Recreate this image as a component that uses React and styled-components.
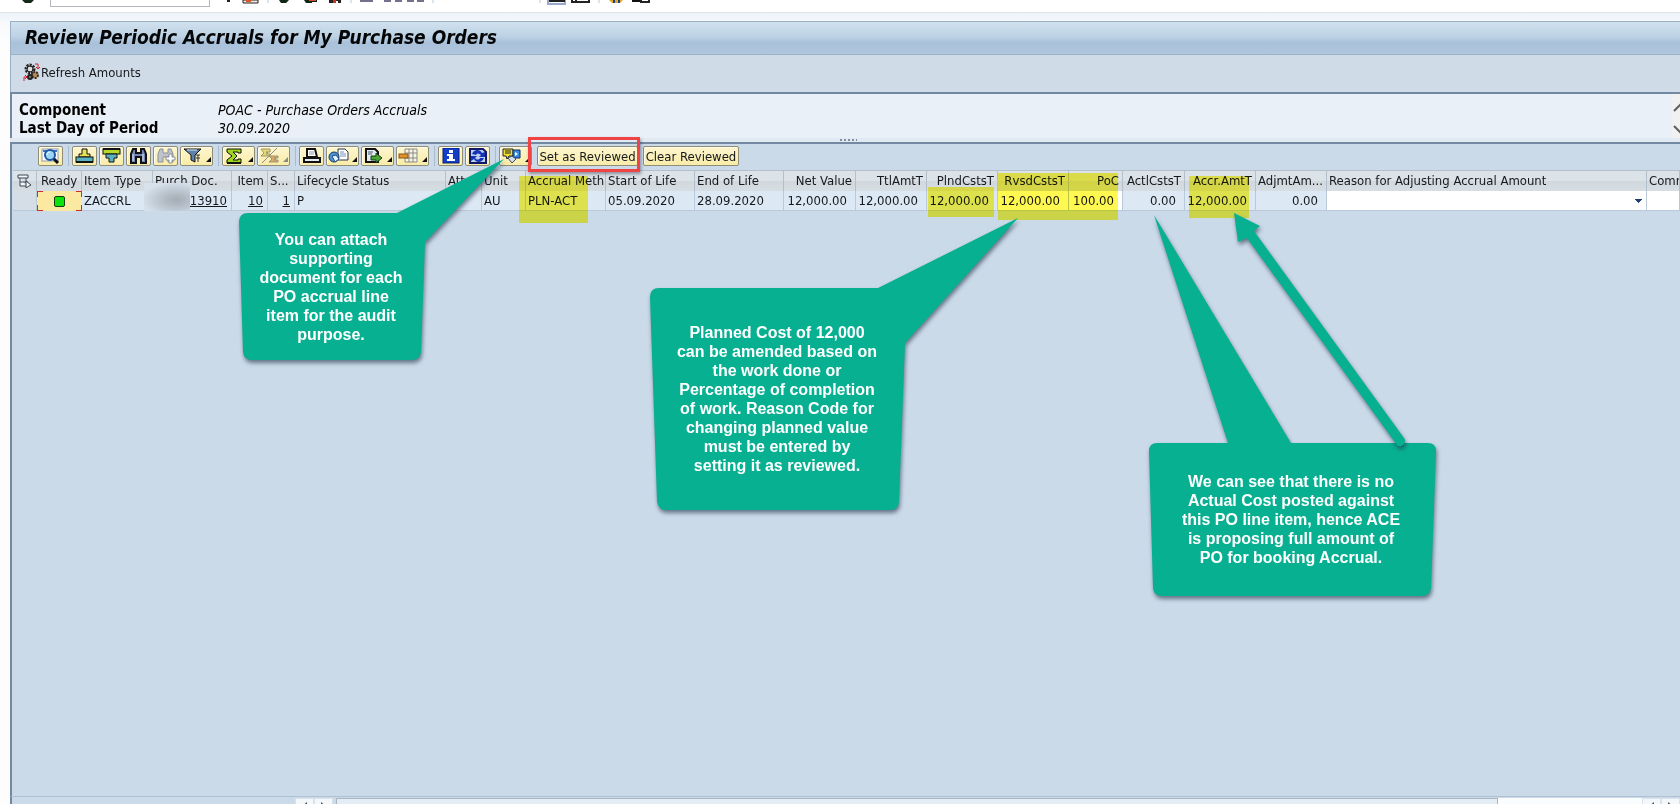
import styled, { createGlobalStyle, css } from "styled-components";

const columns = [
  { id: "sel", width: 24 },
  { id: "ready", title: "Ready", width: 45 },
  { id: "type", title: "Item Type", width: 71 },
  { id: "doc", title: "Purch Doc.", width: 79 },
  { id: "item", title: "Item", width: 36, right: true },
  { id: "seq", title: "S...", width: 27 },
  { id: "status", title: "Lifecycle Status", width: 151 },
  { id: "att", title: "Att", width: 36 },
  { id: "unit", title: "Unit", width: 44 },
  { id: "meth", title: "Accrual Meth", width: 80 },
  { id: "start", title: "Start of Life", width: 89 },
  { id: "end", title: "End of Life", width: 89 },
  { id: "net", title: "Net Value", width: 72, right: true },
  { id: "ttl", title: "TtlAmtT", width: 71, right: true },
  { id: "plnd", title: "PlndCstsT", width: 71, right: true },
  { id: "rvsd", title: "RvsdCstsT", width: 71, right: true },
  { id: "poc", title: "PoC", width: 54, right: true },
  { id: "actl", title: "ActlCstsT", width: 62, right: true },
  { id: "accr", title: "Accr.AmtT", width: 71, right: true },
  { id: "adj", title: "AdjmtAm...", width: 71, right: true },
  { id: "reason", title: "Reason for Adjusting Accrual Amount", width: 320 },
  { id: "comment", title: "Comm" },
];

function MenuTick({ dim }) {
  return <path d="M30 14V9l-5 5z" fill={dim ? "#8a8a80" : "#111"} />;
}

const icons = {
  details: (
    <>
      <rect x="3" y="1" width="16" height="12" fill="#fff" stroke="#8f99a8" />
      <path d="M4 2h14v2H4z" fill="#3c78c8" />
      <path d="M14 10l5 5" stroke="#111" strokeWidth="3" />
      <circle cx="11" cy="7" r="5" fill="#9fd3f2" stroke="#1b58a8" strokeWidth="2" />
      <path d="M8 7c0-2 1-3 3-3" fill="none" stroke="#fff" />
    </>
  ),
  asc: (
    <>
      <path d="M9 1h5v5h3v3H6V6h3z" fill="#e6df57" stroke="#111" />
      <rect x="3" y="9" width="17" height="5" fill="#58b2c4" stroke="#111" />
      <path d="M3 14h17" stroke="#111" strokeWidth="2" />
    </>
  ),
  desc: (
    <>
      <rect x="3" y="1" width="17" height="5" fill="#b6d82e" stroke="#111" />
      <path d="M6 6h11v4h-3v4H9v-4H6z" fill="#58b2c4" stroke="#111" />
      <path d="M3 1h17" stroke="#111" strokeWidth="2" />
    </>
  ),
  find: (
    <>
      <path d="M6 1h3v4h5V1h3l2 5v9h-5V9H9v6H4V6z" fill="#7186b0" stroke="#111" strokeWidth="2" />
      <path d="M6 6v7M16 6v7" stroke="#e5edf8" />
    </>
  ),
  findNext: (
    <>
      <path d="M6 1h3v4h5V1h3l2 5v8h-5V9H9v5H4V6z" fill="#bfc3cb" stroke="#8c9098" />
      <path d="M15 6h3v3h3v3h-3v3h-3v-3h-3V9h3z" fill="#fff" stroke="#8c9098" />
    </>
  ),
  filter: (
    <>
      <path d="M3 1h17l-6 6v7l-4-2V7z" fill="#5d83ad" stroke="#111" />
      <path d="M6 2h10" stroke="#dbe9f5" />
      <path d="M15 7h4M17 7v7M15 10h4" stroke="#333" />
      <MenuTick />
    </>
  ),
  sum: (
    <>
      <path d="M4 1h14v4h-3V4h-5l4 4-4 4h5v-1h3v4H4v-3l5-4-5-4z" fill="#9ed51f" stroke="#111" />
      <path d="M4 15h14" stroke="#111" strokeWidth="2" />
      <MenuTick />
    </>
  ),
  subtotal: (
    <>
      <path d="M3 1h9v3H8l2 1-2 1h4v2H3l3-3z" fill="#e5dc6a" stroke="#9c9572" />
      <path d="M11 8h9v2h-4l2 1-2 1h4v2h-9l3-3z" fill="#e0a76a" stroke="#9c9572" />
      <path d="M19 0L4 15" stroke="#8e8e86" />
      <MenuTick dim />
    </>
  ),
  print: (
    <>
      <path d="M7 1h8l2 8H7z" fill="#fff" stroke="#111" strokeWidth="2" />
      <path d="M9 4h5M9 6h5" stroke="#8a98a8" />
      <path d="M4 10h16v4H4z" fill="#e4ebf2" stroke="#111" strokeWidth="2" />
    </>
  ),
  views: (
    <>
      <path d="M11 1h7l3 3v8h-10z" fill="#fff" stroke="#26324a" />
      <path d="M13 4h4M13 6h6M13 8h6" stroke="#7b92b5" />
      <circle cx="7" cy="9" r="5" fill="#4c93d2" stroke="#1d3c66" />
      <path d="M5 8l4-1 3 4-4 3z" fill="#e8f2fb" stroke="#1d4c86" />
      <MenuTick />
    </>
  ),
  exportFile: (
    <>
      <path d="M4 1h9l3 3v10H4z" fill="#e2eaf2" stroke="#111" strokeWidth="2" />
      <path d="M6 4h5M6 6h4" stroke="#485a70" />
      <path d="M9 8h5V5l6 5-6 5v-3H9z" fill="#4ba436" stroke="#143d12" />
      <MenuTick />
    </>
  ),
  layout: (
    <>
      <path d="M8 1h12v13H8zM8 5h12M8 10h12M12 1v13M16 1v13" fill="#f8f5e5" stroke="#8b8b85" />
      <rect x="2" y="6" width="9" height="4" fill="#e3912b" stroke="#875615" />
      <MenuTick />
    </>
  ),
  info: (
    <>
      <rect x="4" y="0" width="16" height="15" fill="#123fca" stroke="#0a1e77" />
      <path d="M10 2h4v3h-4zM8 6h6v5h2v2H8v-2h2V8H8z" fill="#fff" />
    </>
  ),
  refresh: (
    <>
      <path d="M4 1h13l3 3v11H4z" fill="#bcd0ef" stroke="#101a66" strokeWidth="2" />
      <path d="M6 6c2-5 8-5 10-1l3-1v5h-6l2-2c-2-2-4-2-5 0z" fill="#1632b4" />
      <path d="M18 10c-2 5-8 5-10 1l-3 2V8h6l-2 2c2 2 4 2 5 0z" fill="#1632b4" />
    </>
  ),
  services: (
    <>
      <path d="M3 1h10v7H9l-2 3-1-3H3z" fill="#f0df32" stroke="#222" />
      <path d="M5 3h6M5 5h6" stroke="#222" />
      <path d="M13 2h7v8h-7z" fill="#3689df" stroke="#102b64" />
      <path d="M15 4l3 2-3 2z" fill="#fff" />
      <path d="M8 10l4-2 4 3-4 4z" fill="#d6e1ee" stroke="#39485d" />
      <MenuTick />
    </>
  ),
};

const toolGroups = [
  [["details", "Details"]],
  [
    ["asc", "Sort ascending"],
    ["desc", "Sort descending"],
    ["find", "Find"],
    ["findNext", "Find next"],
    ["filter", "Filter", true],
  ],
  [
    ["sum", "Total", true],
    ["subtotal", "Subtotal", true],
  ],
  [
    ["print", "Print"],
    ["views", "Views", true],
    ["exportFile", "Export", true],
    ["layout", "Layout", true],
  ],
  [
    ["info", "Information"],
    ["refresh", "Refresh"],
  ],
];

function ToolIcon({ name, label, menu }) {
  return (
    <ToolBtn $menu={menu} aria-label={label}>
      <svg width={menu ? 31 : 23} height="16" viewBox={menu ? "0 0 31 16" : "0 0 23 16"}>
        {icons[name]}
      </svg>
    </ToolBtn>
  );
}

function SystemBar() {
  return (
    <SysBar>
      <SysIcons $width={42} viewBox="0 0 42 7">
        <path d="M14 0h12l-3 3h-6z" fill="#132b16" />
      </SysIcons>
      <CommandInput aria-label="Command" />
      <SysIcons $width={450} viewBox="0 0 450 7">
        <path d="M17 0h3v2h-3z" fill="#222" />
        <path d="M33 0h15v3h-15z" fill="#f5ebe0" stroke="#222" />
        <path d="M36 0h5v2h-5z" fill="#df5527" />
        <path d="M58 0v3M141 0v3M223 0v3M330 0v3M389 0v3" stroke="#b3cbdd" />
        <path d="M69 0h10l-3 3h-5zM94 0h13v2h-5v1h-6z" fill="#102616" />
        <path d="M99 0h7v1h-7z" fill="#e1432b" />
        <path d="M119 0h12v3h-3V1h-4v2h-5z" fill="#222" />
        <path d="M123 0h3v3h-3z" fill="#ca3322" />
        <path d="M150 0h13v2h-13zM174 0h7v2h-7zM185 0h7v2h-7zM197 0h7v2h-7zM207 0h7v2h-7z" fill="#75718c" />
        <path d="M338 0v4h17V0" fill="#f5f8fc" stroke="#98a9cb" strokeWidth="2" />
        <path d="M339 1h16M362 0v2h17V0M366 0v2" fill="none" stroke="#222" strokeWidth="2" />
        <path d="M399 0h14l-3 3h-8z" fill="#e6aa22" />
        <path d="M403 0h2v3h-2zM408 0h2v3h-2z" fill="#183e8c" />
        <path d="M422 0h9v2h-9z" fill="#111" />
        <path d="M431 0v2h8V0" fill="#fff" stroke="#222" strokeWidth="2" />
      </SysIcons>
    </SysBar>
  );
}

function AccrualGrid() {
  return (
    <Grid>
      <colgroup>
        {columns.map((c) => (
          <col key={c.id} width={c.width} />
        ))}
      </colgroup>
      <thead>
        <tr>
          {columns.map((c) => (
            <Th key={c.id} $right={c.right}>
              {c.id === "sel" ? (
                <svg width="15" height="14" viewBox="0 0 15 14" aria-label="Select all">
                  <path d="M1 1h10v3H1zM3 4v8h6M3 8h8M9 4v5" fill="#f4f7fa" stroke="#3c4654" />
                  <path d="M9 7l5 4-2 1-3 2z" fill="#f4f7fa" stroke="#3c4654" />
                </svg>
              ) : (
                c.title
              )}
            </Th>
          ))}
        </tr>
      </thead>
      <tbody>
        <tr>
          <Td $tone="#d5dde6" />
          <ReadyCell>
            <Lamp />
          </ReadyCell>
          <Td>ZACCRL</Td>
          <Td $right $tight>
            <DocLink href="#doc">13910</DocLink>
          </Td>
          <Td $right $tight>
            <DocLink href="#item">10</DocLink>
          </Td>
          <Td $right $tight>
            <DocLink href="#seq">1</DocLink>
          </Td>
          <Td>P</Td>
          <Td />
          <Td>AU</Td>
          <Td>PLN-ACT</Td>
          <Td>05.09.2020</Td>
          <Td>28.09.2020</Td>
          <Td $right>12,000.00</Td>
          <Td $right>12,000.00</Td>
          <Td $right>12,000.00</Td>
          <Td $right $tone="#fff">
            12,000.00
          </Td>
          <Td $right $tone="#fff">
            100.00
          </Td>
          <Td $right>0.00</Td>
          <Td $right>12,000.00</Td>
          <Td $right>0.00</Td>
          <Td $tone="#fff">
            <ReasonSelect aria-label="Reason for Adjusting Accrual Amount" />
          </Td>
          <Td $tone="#fff" />
        </tr>
      </tbody>
    </Grid>
  );
}

const Highlight = ({ x, y, w, h }) => <Marker $x={x} $y={y} $w={w} $h={h} />;

function Annotations() {
  return (
    <>
      <Highlight x={519} y={176} w={69} h={47} />
      <Highlight x={928} y={187} w={66} h={30} />
      <Highlight x={998} y={173} w={120} h={47} />
      <Highlight x={1189} y={176} w={60} h={42} />
      <Smudge />
      <RedFrame />
      <Shapes width="1680" height="804" viewBox="0 0 1680 804">
        <path d="M248 213H397L504 159 425 242 421 352Q420 360 412 360H252Q244 360 243 352L239 222Q239 213 248 213Z" />
        <path d="M659 288H878L1018 218 905 343 899 501Q899 510 890 510H666Q658 510 657 501L650 297Q650 288 659 288Z" />
        <path d="M1157 443H1228L1154 215 1291 443H1428Q1436 443 1436 451L1431 588Q1430 596 1422 596H1162Q1154 596 1153 588L1149 451Q1149 443 1157 443Z" />
        <path d="M1234 213L1260 226 1254 231 1404 438A5 5 0 0 1 1397 445L1247 238 1238 242Z" />
      </Shapes>
      <Note $x={252} $y={230} $w={158}>
        You can attach
        <br />
        supporting
        <br />
        document for each
        <br />
        PO accrual line
        <br />
        item for the audit
        <br />
        purpose.
      </Note>
      <Note $x={667} $y={323} $w={220}>
        Planned Cost of 12,000
        <br />
        can be amended based on
        <br />
        the work done or
        <br />
        Percentage of completion
        <br />
        of work. Reason Code for
        <br />
        changing planned value
        <br />
        must be entered by
        <br />
        setting it as reviewed.
      </Note>
      <Note $x={1171} $y={472} $w={240}>
        We can see that there is no
        <br />
        Actual Cost posted against
        <br />
        this PO line item, hence ACE
        <br />
        is proposing full amount of
        <br />
        PO for booking Accrual.
      </Note>
    </>
  );
}

function ScrollArrow({ label, right }) {
  return (
    <ScrollBtn aria-label={label}>
      <svg width="17" height="14" viewBox="0 0 17 14">
        <path d={right ? "M6 3l5 4-5 4z" : "M11 3L6 7l5 4z"} fill="#4d5966" />
      </svg>
    </ScrollBtn>
  );
}

function App() {
  return (
    <Page>
      <GlobalStyle />
      <SystemBar />
      <Window>
        <TitleBar>
          <Title>Review Periodic Accruals for My Purchase Orders</Title>
        </TitleBar>
        <AppToolbar>
          <RefreshBtn>
            <svg width="17" height="19" viewBox="0 0 17 19">
              <circle cx="7" cy="6" r="4" fill="#ddd" stroke="#222" strokeWidth="3" strokeDasharray="2 1" />
              <circle cx="7" cy="6" r="3" fill="none" stroke="#222" />
              <circle cx="12" cy="12" r="3" fill="#b78a54" stroke="#3a2b20" strokeWidth="2" strokeDasharray="2 1" />
              <circle cx="7" cy="14" r="2" fill="#888" stroke="#222" strokeWidth="2" />
              <path d="M12 1h3v4M13 4l2 2 2-2M1 18v-4h3M2 12l2 2-2 2" fill="none" stroke="#d3202f" />
            </svg>
            Refresh Amounts
          </RefreshBtn>
        </AppToolbar>
        <InfoPanel>
          <InfoList>
            <dt>Component</dt>
            <dd>POAC - Purchase Orders Accruals</dd>
            <dt>Last Day of Period</dt>
            <dd>30.09.2020</dd>
          </InfoList>
          <Spinner>
            <svg width="16" height="44" viewBox="0 0 16 44">
              <path d="M2 17l7-7 7 7M2 32l7 7 7-7" fill="none" stroke="#606060" strokeWidth="2" />
            </svg>
          </Spinner>
        </InfoPanel>
        <Splitter>
          <svg width="17" height="3" viewBox="0 0 17 3">
            <path d="M0 2h17" stroke="#7e8ea0" strokeWidth="2" strokeDasharray="2 2" />
          </svg>
        </Splitter>
        <GridPanel>
          <Toolbar>
            {toolGroups.map((group, i) => (
              <ToolGroup key={i}>
                {group.map(([name, label, menu]) => (
                  <ToolIcon key={name} name={name} label={label} menu={menu} />
                ))}
              </ToolGroup>
            ))}
            <ActionGroup>
              <ToolIcon name="services" label="Services for object" menu />
              <TextBtn $width={101}>Set as Reviewed</TextBtn>
              <TextBtn $width={96}>Clear Reviewed</TextBtn>
            </ActionGroup>
          </Toolbar>
          <AccrualGrid />
        </GridPanel>
        <ScrollRow>
          <ScrollArrow label="Scroll left" />
          <ScrollArrow label="Scroll right" right />
          <Track>
            <Thumb />
          </Track>
          <ScrollArrow label="Page left" />
          <ScrollArrow label="Page right" right />
        </ScrollRow>
      </Window>
      <Annotations />
    </Page>
  );
}

const GlobalStyle = createGlobalStyle`
  * {
    box-sizing: border-box;
  }
  body {
    margin: 0;
    background: #fdfdfe;
    color: #15181c;
    font-family: "DejaVu Sans Condensed", "DejaVu Sans", sans-serif;
    font-size: 13px;
  }
  button, input, select {
    font: inherit;
    color: inherit;
  }
`;

const Page = styled.div`
  position: relative;
  height: 100vh;
  overflow: hidden;
  display: flex;
  flex-direction: column;
`;

const SysBar = styled.div`
  height: 13px;
  flex: none;
  display: flex;
  align-items: flex-start;
  padding-left: 8px;
  background: #fff;
  border-bottom: 1px solid #dfe3ea;
`;

const SysIcons = styled.svg`
  width: ${(p) => p.$width}px;
  height: 7px;
`;

const CommandInput = styled.input`
  width: 160px;
  height: 7px;
  padding: 0;
  background: #fff;
  border: 1px solid #b4b8bd;
  border-top: none;
`;

const Window = styled.main`
  flex: 1;
  min-height: 0;
  display: flex;
  flex-direction: column;
  padding: 8px 0 0 10px;
  background: linear-gradient(#eef2fa, #f8fafd 12px, #fdfdfe 30px);
`;

const TitleBar = styled.header`
  height: 34px;
  flex: none;
  display: flex;
  align-items: center;
  padding: 0 0 2px 14px;
  border: 1px solid #9bb0c6;
  border-width: 1px 0 1px 1px;
  background: linear-gradient(#d0e1ee, #bdd2e4 45%, #a9c1da 65%, #afc6dd);
`;

const Title = styled.h1`
  margin: 0;
  font-size: 19px;
  font-style: italic;
  font-weight: bold;
  color: #050607;
`;

const AppToolbar = styled.div`
  height: 37px;
  flex: none;
  display: flex;
  align-items: center;
  padding: 0 0 2px 12px;
  background: #cfdce7;
  border-left: 1px solid #9bb0c6;
`;

const RefreshBtn = styled.button`
  display: flex;
  align-items: center;
  gap: 1px;
  padding: 0;
  border: none;
  background: none;
`;

const InfoPanel = styled.section`
  height: 46px;
  flex: none;
  display: flex;
  justify-content: space-between;
  padding-left: 7px;
  background: #e9f0f7;
  border-top: 2px solid #7389a1;
  border-left: 2px solid #7389a1;
`;

const InfoList = styled.dl`
  display: grid;
  grid-template-columns: 199px auto;
  align-content: start;
  margin: 0;
  padding-top: 7px;
  font-size: 15px;
  line-height: 18px;
  color: #000;

  dt {
    font-weight: bold;
  }
  dd {
    margin: 0;
    font-size: 14px;
    font-style: italic;
  }
`;

const Spinner = styled.div`
  width: 8px;
  overflow: hidden;
  background: #f1f1f1;
`;

const Splitter = styled.div`
  height: 4px;
  flex: none;
  display: flex;
  justify-content: center;
  padding-left: 6px;
  background: #e1eaf2;
`;

const GridPanel = styled.section`
  flex: 1;
  min-height: 0;
  overflow: hidden;
  padding-left: 1px;
  background: #cbdae9;
  border-top: 2px solid #7389a1;
  border-left: 2px solid #7389a1;
`;

const Toolbar = styled.div`
  display: flex;
  align-items: center;
  height: 26px;
  padding: 0 0 2px 25px;
`;

const ToolGroup = styled.div`
  display: flex;
  gap: 2px;
  padding-right: 5px;
  margin-right: 3px;
  border-right: 1px solid #aabaca;
`;

const ActionGroup = styled.div`
  display: flex;
  gap: 5px;
`;

const raised = css`
  height: 20px;
  padding: 0;
  border: 1px solid #8f8c78;
  border-radius: 2px;
  background: linear-gradient(#fdf6cf, #f9eca8);
  box-shadow: inset 1px 1px #fffbe6;
`;

const ToolBtn = styled.button`
  ${raised}
  width: ${(p) => (p.$menu ? 33 : 25)}px;
  display: flex;
  align-items: center;
`;

const TextBtn = styled.button`
  ${raised}
  width: ${(p) => p.$width}px;
  white-space: nowrap;
`;

const Grid = styled.table`
  width: 100%;
  table-layout: fixed;
  border-collapse: separate;
  border-spacing: 0;
  white-space: nowrap;
`;

const Th = styled.th`
  height: 21px;
  padding: 0 ${(p) => (p.$right ? 3 : 0)}px 0 2px;
  overflow: hidden;
  font-weight: normal;
  line-height: 18px;
  text-align: ${(p) => (p.$right ? "right" : "left")};
  background: linear-gradient(#dbe2e8 50%, #d0d7de 50%, #d6dde3);
  border: solid #b3bfcb;
  border-width: 1px 1px 0 0;

  &:first-child svg {
    display: block;
    margin-left: 2px;
  }
  &:nth-child(2) {
    padding-left: 4px;
  }
`;

const Td = styled.td`
  height: 20px;
  padding: 0;
  padding-left: ${(p) => (p.$right ? 0 : 2)}px;
  padding-right: ${(p) => (p.$tight ? 4 : p.$right ? 8 : 0)}px;
  line-height: 18px;
  text-align: ${(p) => (p.$right ? "right" : "left")};
  background: ${(p) => p.$tone || "#dce8f4"};
  border: solid #b9c9da;
  border-width: 0 1px 1px 0;
`;

const ReadyCell = styled(Td)`
  padding: 0;
  border: none;
  background:
    linear-gradient(#d42a2a, #d42a2a) 0 0 / 6px 1px,
    linear-gradient(#d42a2a, #d42a2a) 0 0 / 1px 6px,
    linear-gradient(#d42a2a, #d42a2a) 100% 0 / 6px 1px,
    linear-gradient(#d42a2a, #d42a2a) 100% 0 / 1px 6px,
    linear-gradient(#d42a2a, #d42a2a) 0 100% / 6px 1px,
    linear-gradient(#d42a2a, #d42a2a) 0 100% / 1px 6px,
    linear-gradient(#d42a2a, #d42a2a) 100% 100% / 6px 1px,
    linear-gradient(#d42a2a, #d42a2a) 100% 100% / 1px 6px,
    #fbe9a2;
  background-repeat: no-repeat;
`;

const Lamp = styled.div`
  width: 11px;
  height: 11px;
  margin: 0 auto;
  background: #0be30b;
  border: 1px solid #123f12;
  border-radius: 2px;
`;

const DocLink = styled.a`
  color: inherit;
  text-decoration: underline;
`;

const ReasonSelect = styled.select`
  display: block;
  width: 100%;
  height: 18px;
  padding: 0;
  border: none;
  appearance: none;
  background:
    linear-gradient(to bottom right, #1e4070 50%, transparent 50%) right 3px top 7px / 4px 4px no-repeat,
    linear-gradient(to bottom left, #1e4070 50%, transparent 50%) right 7px top 7px / 4px 4px no-repeat,
    #fff;
`;

const ScrollRow = styled.div`
  height: 8px;
  flex: none;
  display: flex;
  align-items: flex-start;
  overflow: hidden;
  padding: 1px 0 0 283px;
  background: #cbdae9;
  border-top: 1px solid #afc0d2;
  border-left: 2px solid #7389a1;
`;

const ScrollBtn = styled.button`
  width: 19px;
  height: 16px;
  flex: none;
  padding: 0;
  background: #f5f8fb;
  border: 1px solid #d7e2ed;

  svg {
    display: block;
  }
`;

const Track = styled.div`
  flex: 1;
  height: 16px;
  margin-left: 3px;
  background: #fbfcfd;
`;

const Thumb = styled.div`
  width: 89%;
  height: 16px;
  background: #e4edf5;
  border: 1px solid #a9b5c1;
`;

const Marker = styled.div`
  position: absolute;
  left: ${(p) => p.$x}px;
  top: ${(p) => p.$y}px;
  width: ${(p) => p.$w}px;
  height: ${(p) => p.$h}px;
  background: #fff850;
  mix-blend-mode: multiply;
`;

const Smudge = styled.div`
  position: absolute;
  left: 144px;
  top: 183px;
  width: 46px;
  height: 28px;
  background: radial-gradient(ellipse at 70% 60%, #a4acb4, #b9c3cd 35%, #d6e1ec 75%);
`;

const RedFrame = styled.div`
  position: absolute;
  left: 528px;
  top: 137px;
  width: 112px;
  height: 35px;
  border: 3px solid #f04444;
  box-shadow: 1px 2px 3px rgba(60, 60, 80, 0.5);
  pointer-events: none;
`;

const Shapes = styled.svg`
  position: absolute;
  left: 0;
  top: 0;
  fill: #08b092;
  pointer-events: none;

  path {
    filter: drop-shadow(1px 3px 2px rgba(30, 50, 70, 0.6));
  }
`;

const Note = styled.p`
  position: absolute;
  left: ${(p) => p.$x}px;
  top: ${(p) => p.$y}px;
  width: ${(p) => p.$w}px;
  margin: 0;
  font: bold 16px/19px "Liberation Sans", Arial, sans-serif;
  text-align: center;
  white-space: nowrap;
  color: #fff;
`;

export default App;
